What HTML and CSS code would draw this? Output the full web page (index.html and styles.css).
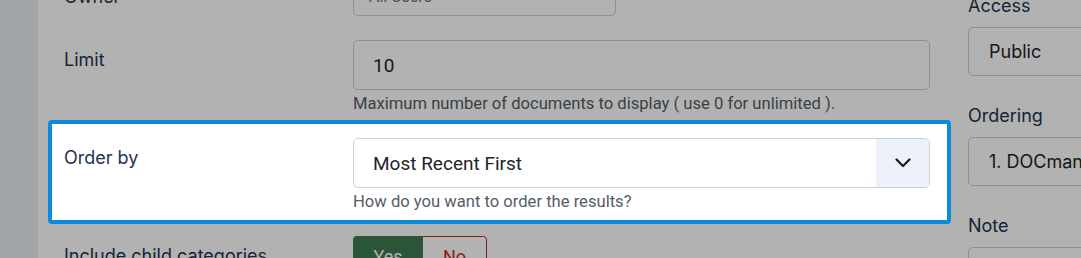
FILE: index.html
```html
<!DOCTYPE html>
<html lang="en">
<head>
  <meta charset="UTF-8" />
  <title>Module options</title>
  <link rel="stylesheet" href="styles.css">
</head>
<body>
  <div class="page">
    <aside class="sidebar"></aside>

    <main class="main">
      <div class="form">
        <div class="row">
          <label class="row-label">Owner</label>
          <div class="row-controls">
            <div class="field field-small">All Users</div>
          </div>
        </div>

        <div class="row">
          <label class="row-label">Limit</label>
          <div class="row-controls">
            <div class="field">10</div>
            <div class="help">Maximum number of documents to display ( use 0 for unlimited ).</div>
          </div>
        </div>

        <div class="row spotlight">
          <label class="row-label">Order by</label>
          <div class="row-controls">
            <div class="field select">
              <span class="select-value">Most Recent First</span>
              <span class="select-btn">
                <svg width="16" height="10" viewBox="0 0 16 10"><polyline points="1.5,1.5 8,8 14.5,1.5" fill="none" stroke="#1a1a1a" stroke-width="2.2" stroke-linecap="round" stroke-linejoin="round"/></svg>
              </span>
            </div>
            <div class="help">How do you want to order the results?</div>
          </div>
        </div>

        <div class="row">
          <label class="row-label">Include child categories</label>
          <div class="row-controls">
            <div class="switcher">
              <span class="switch-yes">Yes</span>
              <span class="switch-no">No</span>
            </div>
          </div>
        </div>
      </div>

      <div class="side">
        <div class="side-group">
          <label class="side-label">Access</label>
          <div class="side-field">Public</div>
        </div>
        <div class="side-group">
          <label class="side-label">Ordering</label>
          <div class="side-field">1. DOCman</div>
        </div>
        <div class="side-group">
          <label class="side-label">Note</label>
          <div class="side-field"></div>
        </div>
      </div>
    </main>
  </div>

  <!-- guided tour backdrop -->
  <div class="overlay"></div>
</body>
</html>
```

FILE: styles.css
```css
body {
  margin: 0;
  font-family: Inter, 'Noto Sans', sans-serif;
  background-color: #fff;
  color: #22344f;
  overflow: hidden;
  height: 258px;
}

.page {
  display: flex;
  height: 100%;
}

.sidebar {
  width: 38px;
  flex-shrink: 0;
  background-color: #e8ecf0;
}

.main {
  display: flex;
  padding-left: 10px;
}

.form {
  width: 903px;
  flex-shrink: 0;
  display: flex;
  flex-direction: column;
  margin-top: -27px;
}

.row {
  display: flex;
  border: 4px solid transparent;
  border-radius: 4px;
  padding: 0 17px 0 12px;
  margin-bottom: 16px;
}

.row.spotlight {
  position: relative;
  z-index: 20;
  background-color: #fff;
  border-color: #0a8bdb;
  padding: 14px 17px 8px 12px;
  margin: -14px 0 8px;
}

.row-label {
  width: 289px;
  flex-shrink: 0;
  margin-top: 8px;
  font-size: 18px;
  line-height: 24px;
  color: #22344f;
}

.row-controls {
  width: 577px;
}

.field {
  box-sizing: border-box;
  height: 50px;
  border: 1px solid #c5d0e0;
  border-radius: 5px;
  background-color: #fff;
  padding-left: 19px;
  display: flex;
  align-items: center;
  font-family: Roboto, sans-serif;
  font-size: 19px;
  color: #212529;
}

.field-small {
  width: 263px;
  height: 39px;
  padding-left: 15px;
  font-size: 16px;
  color: #6d7278;
  border-color: #d0d0d0;
}

.select {
  padding-right: 0;
  justify-content: space-between;
  overflow: hidden;
}

.select-btn {
  width: 53px;
  height: 100%;
  background-color: #edf1fa;
  display: flex;
  align-items: center;
  justify-content: center;
}

.help {
  margin-top: 4px;
  font-family: Roboto, sans-serif;
  font-size: 16.6px;
  line-height: 20px;
  color: #545d68;
}

.switcher {
  display: inline-flex;
  height: 40px;
  border-radius: 4px;
  overflow: hidden;
  font-family: Roboto, sans-serif;
  font-size: 18px;
}

.switch-yes {
  width: 70px;
  background-color: #3e7a50;
  color: #fff;
  display: flex;
  align-items: center;
  justify-content: center;
}

.switch-no {
  width: 63px;
  border: 1px solid #c52827;
  border-left: none;
  border-radius: 0 4px 4px 0;
  color: #c52827;
  display: flex;
  align-items: center;
  justify-content: center;
}

.side {
  width: 320px;
  flex-shrink: 0;
  margin-left: 17px;
  margin-top: -6px;
}

.side-group {
  margin-bottom: 28px;
}

.side-label {
  display: block;
  font-size: 18px;
  line-height: 24px;
  margin-bottom: 9px;
  color: #22344f;
}

.side-field {
  box-sizing: border-box;
  height: 49px;
  border: 1px solid #c5d0e0;
  border-radius: 5px;
  padding-left: 20px;
  display: flex;
  align-items: center;
  font-size: 18px;
  color: #212529;
}

.overlay {
  position: fixed;
  inset: 0;
  background-color: rgba(0, 0, 0, 0.3);
  z-index: 10;
}
```
